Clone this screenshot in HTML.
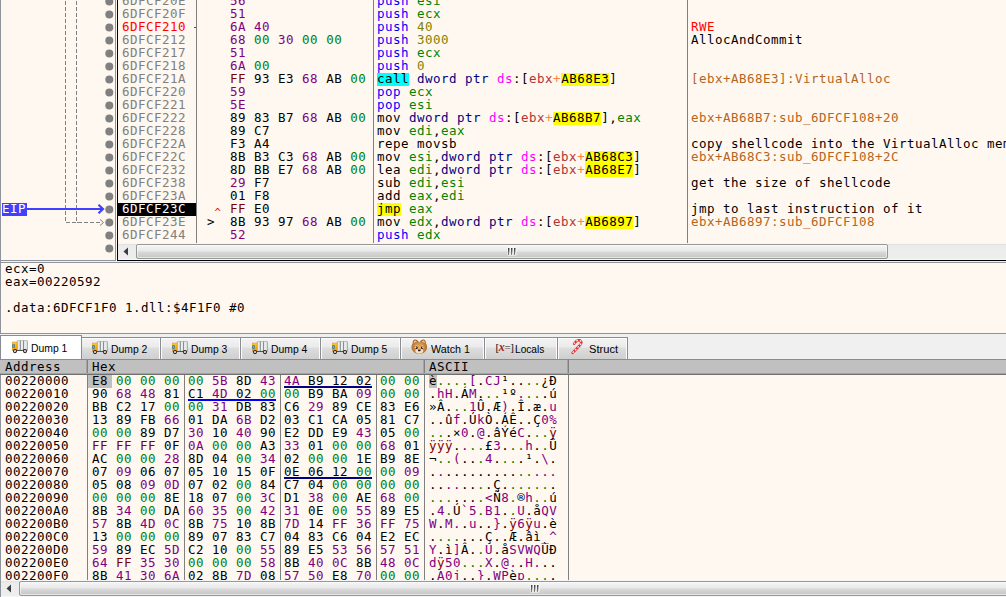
<!DOCTYPE html>
<html><head><meta charset="utf-8"><title>x64dbg</title>
<style>
html,body{margin:0;padding:0;}
body{width:1006px;height:597px;overflow:hidden;background:#FFF8F0;position:relative;font-family:"Liberation Sans",sans-serif;}
.abs{position:absolute;}
.m{font-family:"DejaVu Sans Mono","Liberation Mono",monospace;font-size:12.5px;letter-spacing:0.4744px;line-height:13px;white-space:pre;height:13px;}
.row{position:absolute;left:0;height:13px;}
.row span{position:absolute;top:-1px;height:13px;}
.row span i{font-style:normal;}
.row span.c{}
.bl{position:absolute;width:8px;height:8px;border-radius:50%;background:#808080;left:105.3px;}
.tab{position:absolute;top:338px;height:21px;box-sizing:border-box;border:1px solid #A9A9A9;border-bottom:none;background:linear-gradient(#F4F4F4 0%,#EDEDED 45%,#DEDEDE 55%,#D6D6D6 100%);}
.tab.act{top:335px;height:24px;background:#fff;border-color:#8C8E94;z-index:3;}
.tl{position:absolute;font-size:11px;line-height:14px;color:#000;white-space:pre;transform-origin:0 0;transform:scaleX(0.94);}
.ic{position:absolute;width:16px;height:16px;}
</style></head>
<body>
<div class="abs" style="left:0;top:0;width:1px;height:597px;background:#8E939C"></div>
<div class="abs" style="left:115px;top:0;width:1px;height:261px;background:#8E939C"></div>
<div class="abs" style="left:0;top:260px;width:116px;height:1px;background:#8E939C"></div>
<div class="abs" style="left:117px;top:0;width:1px;height:261px;background:#000"></div>
<div class="abs" style="left:117px;top:260px;width:889px;height:1px;background:#000"></div>
<svg class="abs" style="left:0;top:0" width="117" height="260" viewBox="0 0 117 260"><path d="M65.5 -5V222.5H102" fill="none" stroke="#808080" stroke-width="1" stroke-dasharray="4 2" shape-rendering="crispEdges"/><path d="M76.5 -5V222.5H80" fill="none" stroke="#808080" stroke-width="1" stroke-dasharray="4 2" shape-rendering="crispEdges"/><path d="M100 219.5L103.5 222.5L100 225.5" fill="none" stroke="#808080" stroke-width="1"/><rect x="2" y="203" width="25" height="13" fill="#4040FF"/><path d="M27 209H102" stroke="#4040FF" stroke-width="2" fill="none"/><path d="M98.5 204.8L103 209L98.5 213.2" stroke="#4040FF" stroke-width="2.2" fill="none"/><circle cx="109.3" cy="1.5" r="4" fill="#808080"/><circle cx="109.3" cy="14.5" r="4" fill="#808080"/><circle cx="109.3" cy="27.5" r="4" fill="#808080"/><circle cx="109.3" cy="40.5" r="4" fill="#808080"/><circle cx="109.3" cy="53.5" r="4" fill="#808080"/><circle cx="109.3" cy="66.5" r="4" fill="#808080"/><circle cx="109.3" cy="79.5" r="4" fill="#808080"/><circle cx="109.3" cy="92.5" r="4" fill="#808080"/><circle cx="109.3" cy="105.5" r="4" fill="#808080"/><circle cx="109.3" cy="118.5" r="4" fill="#808080"/><circle cx="109.3" cy="131.5" r="4" fill="#808080"/><circle cx="109.3" cy="144.5" r="4" fill="#808080"/><circle cx="109.3" cy="157.5" r="4" fill="#808080"/><circle cx="109.3" cy="170.5" r="4" fill="#808080"/><circle cx="109.3" cy="183.5" r="4" fill="#808080"/><circle cx="109.3" cy="196.5" r="4" fill="#808080"/><circle cx="109.3" cy="209.5" r="4" fill="#808080"/><circle cx="109.3" cy="222.5" r="4" fill="#808080"/><circle cx="109.3" cy="235.5" r="4" fill="#808080"/><circle cx="109.3" cy="248.5" r="4" fill="#808080"/></svg>
<div class="m abs" style="left:2px;top:202px;color:#fff;">EIP</div>
<div class="abs" style="left:196px;top:0;width:1px;height:243px;background:#808080"></div>
<div class="abs" style="left:373px;top:0;width:1px;height:243px;background:#808080"></div>
<div class="abs" style="left:687px;top:0;width:1px;height:243px;background:#808080"></div>
<div class="abs" style="left:118px;top:0;width:888px;height:243px;overflow:hidden;">
<div class="row m" style="top:-5px;width:888px;">
<span class="c" style="left:4px;color:#808080;">6DFCF20E</span>
<span class="c" style="left:112px;"><i style="color:#800080">56</i></span>
<span style="left:259px;"><i style="color:#0000FF">push</i><i style="color:#000000"> </i><i style="color:#008300">esi</i></span>
</div>
<div class="row m" style="top:8px;width:888px;">
<span class="c" style="left:4px;color:#808080;">6DFCF20F</span>
<span class="c" style="left:112px;"><i style="color:#800080">51</i></span>
<span style="left:259px;"><i style="color:#0000FF">push</i><i style="color:#000000"> </i><i style="color:#008300">ecx</i></span>
</div>
<div class="row m" style="top:21px;width:888px;">
<span class="c" style="left:4px;color:#FF0000;">6DFCF210</span>
<span class="c" style="left:112px;"><i style="color:#800080">6A</i> <i style="color:#800080">40</i></span>
<span style="left:259px;"><i style="color:#0000FF">push</i><i style="color:#000000"> </i><i style="color:#828200">40</i></span>
<span style="left:573px;color:#FF0000;">RWE</span>
</div>
<div class="row m" style="top:34px;width:888px;">
<span class="c" style="left:4px;color:#808080;">6DFCF212</span>
<span class="c" style="left:112px;"><i style="color:#800080">68</i> <i style="color:#008000">00</i> <i style="color:#800080">30</i> <i style="color:#008000">00</i> <i style="color:#008000">00</i></span>
<span style="left:259px;"><i style="color:#0000FF">push</i><i style="color:#000000"> </i><i style="color:#828200">3000</i></span>
<span style="left:573px;color:#000;">AllocAndCommit</span>
</div>
<div class="row m" style="top:47px;width:888px;">
<span class="c" style="left:4px;color:#808080;">6DFCF217</span>
<span class="c" style="left:112px;"><i style="color:#800080">51</i></span>
<span style="left:259px;"><i style="color:#0000FF">push</i><i style="color:#000000"> </i><i style="color:#008300">ecx</i></span>
</div>
<div class="row m" style="top:60px;width:888px;">
<span class="c" style="left:4px;color:#808080;">6DFCF218</span>
<span class="c" style="left:112px;"><i style="color:#800080">6A</i> <i style="color:#008000">00</i></span>
<span style="left:259px;"><i style="color:#0000FF">push</i><i style="color:#000000"> </i><i style="color:#828200">0</i></span>
</div>
<div class="row m" style="top:73px;width:888px;">
<span class="c" style="left:4px;color:#808080;">6DFCF21A</span>
<span class="c" style="left:112px;"><i style="color:#800000">FF</i> <i style="color:#000000">93</i> <i style="color:#000000">E3</i> <i style="color:#800080">68</i> <i style="color:#000000">AB</i> <i style="color:#008000">00</i></span>
<b style="position:absolute;left:259px;top:0;width:32px;height:13px;background:#00FFFF"></b><b style="position:absolute;left:443px;top:0;width:48px;height:13px;background:#FFFF00"></b><span style="left:259px;"><i style="color:#000000">call</i><i style="color:#000000"> </i><i style="color:#000080">dword ptr</i><i style="color:#000000"> </i><i style="color:#FF00FF">ds</i><i style="color:#000000">:[</i><i style="color:#B03434">ebx</i><i style="color:#FF8040">+</i><i style="color:#000000">AB68E3</i><i style="color:#000000">]</i></span>
<span style="left:573px;color:#B5651D;">[ebx+AB68E3]:VirtualAlloc</span>
</div>
<div class="row m" style="top:86px;width:888px;">
<span class="c" style="left:4px;color:#808080;">6DFCF220</span>
<span class="c" style="left:112px;"><i style="color:#800080">59</i></span>
<span style="left:259px;"><i style="color:#0000FF">pop</i><i style="color:#000000"> </i><i style="color:#008300">ecx</i></span>
</div>
<div class="row m" style="top:99px;width:888px;">
<span class="c" style="left:4px;color:#808080;">6DFCF221</span>
<span class="c" style="left:112px;"><i style="color:#800080">5E</i></span>
<span style="left:259px;"><i style="color:#0000FF">pop</i><i style="color:#000000"> </i><i style="color:#008300">esi</i></span>
</div>
<div class="row m" style="top:112px;width:888px;">
<span class="c" style="left:4px;color:#808080;">6DFCF222</span>
<span class="c" style="left:112px;"><i style="color:#000000">89</i> <i style="color:#000000">83</i> <i style="color:#000000">B7</i> <i style="color:#800080">68</i> <i style="color:#000000">AB</i> <i style="color:#008000">00</i></span>
<b style="position:absolute;left:435px;top:0;width:48px;height:13px;background:#FFFF00"></b><span style="left:259px;"><i style="color:#000000">mov </i><i style="color:#000080">dword ptr</i><i style="color:#000000"> </i><i style="color:#FF00FF">ds</i><i style="color:#000000">:[</i><i style="color:#B03434">ebx</i><i style="color:#FF8040">+</i><i style="color:#000000">AB68B7</i><i style="color:#000000">]</i><i style="color:#000000">,</i><i style="color:#008300">eax</i></span>
<span style="left:573px;color:#B5651D;">ebx+AB68B7:sub_6DFCF108+20</span>
</div>
<div class="row m" style="top:125px;width:888px;">
<span class="c" style="left:4px;color:#808080;">6DFCF228</span>
<span class="c" style="left:112px;"><i style="color:#000000">89</i> <i style="color:#000000">C7</i></span>
<span style="left:259px;"><i style="color:#000000">mov </i><i style="color:#008300">edi</i><i style="color:#000000">,</i><i style="color:#008300">eax</i></span>
</div>
<div class="row m" style="top:138px;width:888px;">
<span class="c" style="left:4px;color:#808080;">6DFCF22A</span>
<span class="c" style="left:112px;"><i style="color:#000000">F3</i> <i style="color:#000000">A4</i></span>
<span style="left:259px;"><i style="color:#000000">repe movsb</i></span>
<span style="left:573px;color:#000;">copy shellcode into the VirtualAlloc mem</span>
</div>
<div class="row m" style="top:151px;width:888px;">
<span class="c" style="left:4px;color:#808080;">6DFCF22C</span>
<span class="c" style="left:112px;"><i style="color:#000000">8B</i> <i style="color:#000000">B3</i> <i style="color:#000000">C3</i> <i style="color:#800080">68</i> <i style="color:#000000">AB</i> <i style="color:#008000">00</i></span>
<b style="position:absolute;left:467px;top:0;width:48px;height:13px;background:#FFFF00"></b><span style="left:259px;"><i style="color:#000000">mov </i><i style="color:#008300">esi</i><i style="color:#000000">,</i><i style="color:#000080">dword ptr</i><i style="color:#000000"> </i><i style="color:#FF00FF">ds</i><i style="color:#000000">:[</i><i style="color:#B03434">ebx</i><i style="color:#FF8040">+</i><i style="color:#000000">AB68C3</i><i style="color:#000000">]</i></span>
<span style="left:573px;color:#B5651D;">ebx+AB68C3:sub_6DFCF108+2C</span>
</div>
<div class="row m" style="top:164px;width:888px;">
<span class="c" style="left:4px;color:#808080;">6DFCF232</span>
<span class="c" style="left:112px;"><i style="color:#000000">8D</i> <i style="color:#000000">BB</i> <i style="color:#000000">E7</i> <i style="color:#800080">68</i> <i style="color:#000000">AB</i> <i style="color:#008000">00</i></span>
<b style="position:absolute;left:467px;top:0;width:48px;height:13px;background:#FFFF00"></b><span style="left:259px;"><i style="color:#000000">lea </i><i style="color:#008300">edi</i><i style="color:#000000">,</i><i style="color:#000080">dword ptr</i><i style="color:#000000"> </i><i style="color:#FF00FF">ds</i><i style="color:#000000">:[</i><i style="color:#B03434">ebx</i><i style="color:#FF8040">+</i><i style="color:#000000">AB68E7</i><i style="color:#000000">]</i></span>
</div>
<div class="row m" style="top:177px;width:888px;">
<span class="c" style="left:4px;color:#808080;">6DFCF238</span>
<span class="c" style="left:112px;"><i style="color:#800080">29</i> <i style="color:#000000">F7</i></span>
<span style="left:259px;"><i style="color:#000000">sub </i><i style="color:#008300">edi</i><i style="color:#000000">,</i><i style="color:#008300">esi</i></span>
<span style="left:573px;color:#000;">get the size of shellcode</span>
</div>
<div class="row m" style="top:190px;width:888px;">
<span class="c" style="left:4px;color:#808080;">6DFCF23A</span>
<span class="c" style="left:112px;"><i style="color:#000000">01</i> <i style="color:#000000">F8</i></span>
<span style="left:259px;"><i style="color:#000000">add </i><i style="color:#008300">eax</i><i style="color:#000000">,</i><i style="color:#008300">edi</i></span>
</div>
<div class="row m" style="top:203px;width:888px;">
<b style="position:absolute;left:0px;top:0;width:78px;height:13px;background:#000;"></b>
<span class="c" style="left:4px;color:#fff;">6DFCF23C</span>
<span style="left:95.5px;color:#FF0000;transform:translateY(4px) scale(0.85,0.8);transform-origin:4px 6px;">^</span>
<span class="c" style="left:112px;"><i style="color:#800000">FF</i> <i style="color:#000000">E0</i></span>
<b style="position:absolute;left:259px;top:0;width:24px;height:13px;background:#FFFF00"></b><span style="left:259px;"><i style="color:#000000">jmp</i><i style="color:#000000"> </i><i style="color:#008300">eax</i></span>
<span style="left:573px;color:#000;">jmp to last instruction of it</span>
</div>
<div class="row m" style="top:216px;width:888px;">
<span class="c" style="left:4px;color:#808080;">6DFCF23E</span>
<span style="left:89px;color:#000;">&gt;</span>
<span class="c" style="left:112px;"><i style="color:#000000">8B</i> <i style="color:#000000">93</i> <i style="color:#000000">97</i> <i style="color:#800080">68</i> <i style="color:#000000">AB</i> <i style="color:#008000">00</i></span>
<b style="position:absolute;left:467px;top:0;width:48px;height:13px;background:#FFFF00"></b><span style="left:259px;"><i style="color:#000000">mov </i><i style="color:#008300">edx</i><i style="color:#000000">,</i><i style="color:#000080">dword ptr</i><i style="color:#000000"> </i><i style="color:#FF00FF">ds</i><i style="color:#000000">:[</i><i style="color:#B03434">ebx</i><i style="color:#FF8040">+</i><i style="color:#000000">AB6897</i><i style="color:#000000">]</i></span>
<span style="left:573px;color:#B5651D;">ebx+AB6897:sub_6DFCF108</span>
</div>
<div class="row m" style="top:229px;width:888px;">
<span class="c" style="left:4px;color:#808080;">6DFCF244</span>
<span class="c" style="left:112px;"><i style="color:#800080">52</i></span>
<span style="left:259px;"><i style="color:#0000FF">push</i><i style="color:#000000"> </i><i style="color:#008300">edx</i></span>
</div>
<div class="abs" style="left:76px;top:27px;width:2px;height:1px;background:#FF0000"></div>
</div>
<div class="abs" style="left:118px;top:243px;width:888px;height:17px;background:linear-gradient(#F6F6F6 0px,#F6F6F6 1px,#E0E0E0 1px,#ECECEC 3px,#EEEEEE 16px,#F8F8F8 16px);overflow:hidden;"><svg class="abs" style="left:0;top:0" width="18" height="17"><path d="M5.5 8.5L10 4.5V12.5Z" fill="#3C3C3C"/></svg><div class="abs" style="left:18px;top:1px;width:752px;height:15px;box-sizing:border-box;border:1px solid #979797;border-radius:2px;background:linear-gradient(#F5F5F5 0px,#E9E9E9 6px,#D9D9D9 7px,#C6C6C6 13px);box-shadow:inset 0 0 0 1px rgba(255,255,255,0.55);"></div><div class="abs" style="left:389px;top:4px;width:10px;height:9px;background:rgba(255,255,255,0.45);border-radius:2px;"></div><div class="abs" style="left:390px;top:5px;width:1px;height:7px;background:linear-gradient(#3A3A3A,#8A8A8A);"></div><div class="abs" style="left:391px;top:5px;width:1px;height:7px;background:linear-gradient(#9A9A9A,#F4F4F4);"></div><div class="abs" style="left:393px;top:5px;width:1px;height:7px;background:linear-gradient(#3A3A3A,#8A8A8A);"></div><div class="abs" style="left:394px;top:5px;width:1px;height:7px;background:linear-gradient(#9A9A9A,#F4F4F4);"></div><div class="abs" style="left:396px;top:5px;width:1px;height:7px;background:linear-gradient(#3A3A3A,#8A8A8A);"></div><div class="abs" style="left:397px;top:5px;width:1px;height:7px;background:linear-gradient(#9A9A9A,#F4F4F4);"></div></div>
<div class="abs" style="left:1px;top:261px;width:1005px;height:1px;background:#F2F2F2"></div>
<div class="abs" style="left:0;top:262px;width:1006px;height:1px;background:#8E939C"></div>
<div class="abs" style="left:0;top:333px;width:1006px;height:1px;background:#8E939C"></div>
<div class="m abs" style="left:5px;top:262px;color:#000;">ecx=0</div>
<div class="m abs" style="left:5px;top:275px;color:#000;">eax=00220592</div>
<div class="m abs" style="left:5px;top:288px;color:#000;"></div>
<div class="m abs" style="left:5px;top:301px;color:#000;">.data:6DFCF1F0 1.dll:$4F1F0 #0</div>
<div class="abs" style="left:0;top:334px;width:1006px;height:25px;background:#F0F0F0"></div>
<div class="abs" style="left:0;top:359px;width:1006px;height:1px;background:#898C95;z-index:5"></div>
<div class="abs" style="left:0px;top:335px;width:82px;height:24px;box-sizing:border-box;border:1px solid #898C95;border-bottom:none;background:#fff;z-index:3"></div>
<svg class="ic" style="z-index:4;left:12px;top:340px" viewBox="0 0 16 16"><defs><linearGradient id="tg0" x1="0" x2="1" y1="0" y2="0"><stop offset="0" stop-color="#B4B4B8"/><stop offset="0.08" stop-color="#F4F4F6"/><stop offset="0.24" stop-color="#DCDCE6"/><stop offset="0.30" stop-color="#7C7C80"/><stop offset="0.36" stop-color="#F8F8F8"/><stop offset="0.55" stop-color="#E0E6E2"/><stop offset="0.61" stop-color="#7C7C80"/><stop offset="0.67" stop-color="#F8F8F8"/><stop offset="0.9" stop-color="#D4E0D8"/><stop offset="1" stop-color="#9C9CA0"/></linearGradient><linearGradient id="cb0" x1="0" x2="0" y1="0" y2="1"><stop offset="0" stop-color="#FFD040"/><stop offset="0.3" stop-color="#FFB810"/><stop offset="1" stop-color="#EFA000"/></linearGradient></defs><path d="M5 10.2V1.8Q5 0.4 6.4 0.4H14.4Q15.8 0.4 15.8 1.8V10.2Z" fill="url(#tg0)" stroke="#A0A0A4" stroke-width="0.7"/><path d="M8.35 1V10M11.7 1V10" stroke="#8C8C90" stroke-width="0.8"/><rect x="0.2" y="2" width="4.9" height="8.6" fill="url(#cb0)" stroke="#D89410" stroke-width="0.5"/><rect x="0.2" y="4.3" width="2.6" height="3.5" fill="#3C78B8"/><rect x="1.2" y="5" width="0.9" height="2.2" fill="#78A8D8"/><rect x="5" y="10" width="6.2" height="0.9" fill="#4A4040"/><circle cx="3" cy="11.1" r="2.05" fill="#2C1818"/><circle cx="3" cy="11.1" r="1.05" fill="#E4E4E4"/><circle cx="13" cy="11.1" r="2.05" fill="#2C1818"/><circle cx="13" cy="11.1" r="1.05" fill="#E4E4E4"/></svg>
<div class="tl" style="left:31.1px;top:340.5px;z-index:4;transform:scaleX(0.943);">Dump 1</div>
<div class="abs" style="left:80px;top:337px;width:81px;height:22px;box-sizing:border-box;border:1px solid #898C95;border-bottom:none;background:linear-gradient(#F3F3F3 0px,#EBEBEB 9px,#DDDDDD 10px,#CFCFCF 21px);box-shadow:inset 1px 1px 0 #FCFCFC,inset -1px 0 0 #FCFCFC;"></div>
<svg class="ic" style="z-index:4;left:92px;top:341px" viewBox="0 0 16 16"><defs><linearGradient id="tg1" x1="0" x2="1" y1="0" y2="0"><stop offset="0" stop-color="#B4B4B8"/><stop offset="0.08" stop-color="#F4F4F6"/><stop offset="0.24" stop-color="#DCDCE6"/><stop offset="0.30" stop-color="#7C7C80"/><stop offset="0.36" stop-color="#F8F8F8"/><stop offset="0.55" stop-color="#E0E6E2"/><stop offset="0.61" stop-color="#7C7C80"/><stop offset="0.67" stop-color="#F8F8F8"/><stop offset="0.9" stop-color="#D4E0D8"/><stop offset="1" stop-color="#9C9CA0"/></linearGradient><linearGradient id="cb1" x1="0" x2="0" y1="0" y2="1"><stop offset="0" stop-color="#FFD040"/><stop offset="0.3" stop-color="#FFB810"/><stop offset="1" stop-color="#EFA000"/></linearGradient></defs><path d="M5 10.2V1.8Q5 0.4 6.4 0.4H14.4Q15.8 0.4 15.8 1.8V10.2Z" fill="url(#tg1)" stroke="#A0A0A4" stroke-width="0.7"/><path d="M8.35 1V10M11.7 1V10" stroke="#8C8C90" stroke-width="0.8"/><rect x="0.2" y="2" width="4.9" height="8.6" fill="url(#cb1)" stroke="#D89410" stroke-width="0.5"/><rect x="0.2" y="4.3" width="2.6" height="3.5" fill="#3C78B8"/><rect x="1.2" y="5" width="0.9" height="2.2" fill="#78A8D8"/><rect x="5" y="10" width="6.2" height="0.9" fill="#4A4040"/><circle cx="3" cy="11.1" r="2.05" fill="#2C1818"/><circle cx="3" cy="11.1" r="1.05" fill="#E4E4E4"/><circle cx="13" cy="11.1" r="2.05" fill="#2C1818"/><circle cx="13" cy="11.1" r="1.05" fill="#E4E4E4"/></svg>
<div class="tl" style="left:111.4px;top:342px;z-index:4;transform:scaleX(0.943);">Dump 2</div>
<div class="abs" style="left:160px;top:337px;width:81px;height:22px;box-sizing:border-box;border:1px solid #898C95;border-bottom:none;background:linear-gradient(#F3F3F3 0px,#EBEBEB 9px,#DDDDDD 10px,#CFCFCF 21px);box-shadow:inset 1px 1px 0 #FCFCFC,inset -1px 0 0 #FCFCFC;"></div>
<svg class="ic" style="z-index:4;left:172px;top:341px" viewBox="0 0 16 16"><defs><linearGradient id="tg2" x1="0" x2="1" y1="0" y2="0"><stop offset="0" stop-color="#B4B4B8"/><stop offset="0.08" stop-color="#F4F4F6"/><stop offset="0.24" stop-color="#DCDCE6"/><stop offset="0.30" stop-color="#7C7C80"/><stop offset="0.36" stop-color="#F8F8F8"/><stop offset="0.55" stop-color="#E0E6E2"/><stop offset="0.61" stop-color="#7C7C80"/><stop offset="0.67" stop-color="#F8F8F8"/><stop offset="0.9" stop-color="#D4E0D8"/><stop offset="1" stop-color="#9C9CA0"/></linearGradient><linearGradient id="cb2" x1="0" x2="0" y1="0" y2="1"><stop offset="0" stop-color="#FFD040"/><stop offset="0.3" stop-color="#FFB810"/><stop offset="1" stop-color="#EFA000"/></linearGradient></defs><path d="M5 10.2V1.8Q5 0.4 6.4 0.4H14.4Q15.8 0.4 15.8 1.8V10.2Z" fill="url(#tg2)" stroke="#A0A0A4" stroke-width="0.7"/><path d="M8.35 1V10M11.7 1V10" stroke="#8C8C90" stroke-width="0.8"/><rect x="0.2" y="2" width="4.9" height="8.6" fill="url(#cb2)" stroke="#D89410" stroke-width="0.5"/><rect x="0.2" y="4.3" width="2.6" height="3.5" fill="#3C78B8"/><rect x="1.2" y="5" width="0.9" height="2.2" fill="#78A8D8"/><rect x="5" y="10" width="6.2" height="0.9" fill="#4A4040"/><circle cx="3" cy="11.1" r="2.05" fill="#2C1818"/><circle cx="3" cy="11.1" r="1.05" fill="#E4E4E4"/><circle cx="13" cy="11.1" r="2.05" fill="#2C1818"/><circle cx="13" cy="11.1" r="1.05" fill="#E4E4E4"/></svg>
<div class="tl" style="left:191.4px;top:342px;z-index:4;transform:scaleX(0.943);">Dump 3</div>
<div class="abs" style="left:240px;top:337px;width:81px;height:22px;box-sizing:border-box;border:1px solid #898C95;border-bottom:none;background:linear-gradient(#F3F3F3 0px,#EBEBEB 9px,#DDDDDD 10px,#CFCFCF 21px);box-shadow:inset 1px 1px 0 #FCFCFC,inset -1px 0 0 #FCFCFC;"></div>
<svg class="ic" style="z-index:4;left:252px;top:341px" viewBox="0 0 16 16"><defs><linearGradient id="tg3" x1="0" x2="1" y1="0" y2="0"><stop offset="0" stop-color="#B4B4B8"/><stop offset="0.08" stop-color="#F4F4F6"/><stop offset="0.24" stop-color="#DCDCE6"/><stop offset="0.30" stop-color="#7C7C80"/><stop offset="0.36" stop-color="#F8F8F8"/><stop offset="0.55" stop-color="#E0E6E2"/><stop offset="0.61" stop-color="#7C7C80"/><stop offset="0.67" stop-color="#F8F8F8"/><stop offset="0.9" stop-color="#D4E0D8"/><stop offset="1" stop-color="#9C9CA0"/></linearGradient><linearGradient id="cb3" x1="0" x2="0" y1="0" y2="1"><stop offset="0" stop-color="#FFD040"/><stop offset="0.3" stop-color="#FFB810"/><stop offset="1" stop-color="#EFA000"/></linearGradient></defs><path d="M5 10.2V1.8Q5 0.4 6.4 0.4H14.4Q15.8 0.4 15.8 1.8V10.2Z" fill="url(#tg3)" stroke="#A0A0A4" stroke-width="0.7"/><path d="M8.35 1V10M11.7 1V10" stroke="#8C8C90" stroke-width="0.8"/><rect x="0.2" y="2" width="4.9" height="8.6" fill="url(#cb3)" stroke="#D89410" stroke-width="0.5"/><rect x="0.2" y="4.3" width="2.6" height="3.5" fill="#3C78B8"/><rect x="1.2" y="5" width="0.9" height="2.2" fill="#78A8D8"/><rect x="5" y="10" width="6.2" height="0.9" fill="#4A4040"/><circle cx="3" cy="11.1" r="2.05" fill="#2C1818"/><circle cx="3" cy="11.1" r="1.05" fill="#E4E4E4"/><circle cx="13" cy="11.1" r="2.05" fill="#2C1818"/><circle cx="13" cy="11.1" r="1.05" fill="#E4E4E4"/></svg>
<div class="tl" style="left:271.4px;top:342px;z-index:4;transform:scaleX(0.943);">Dump 4</div>
<div class="abs" style="left:320px;top:337px;width:81px;height:22px;box-sizing:border-box;border:1px solid #898C95;border-bottom:none;background:linear-gradient(#F3F3F3 0px,#EBEBEB 9px,#DDDDDD 10px,#CFCFCF 21px);box-shadow:inset 1px 1px 0 #FCFCFC,inset -1px 0 0 #FCFCFC;"></div>
<svg class="ic" style="z-index:4;left:332px;top:341px" viewBox="0 0 16 16"><defs><linearGradient id="tg4" x1="0" x2="1" y1="0" y2="0"><stop offset="0" stop-color="#B4B4B8"/><stop offset="0.08" stop-color="#F4F4F6"/><stop offset="0.24" stop-color="#DCDCE6"/><stop offset="0.30" stop-color="#7C7C80"/><stop offset="0.36" stop-color="#F8F8F8"/><stop offset="0.55" stop-color="#E0E6E2"/><stop offset="0.61" stop-color="#7C7C80"/><stop offset="0.67" stop-color="#F8F8F8"/><stop offset="0.9" stop-color="#D4E0D8"/><stop offset="1" stop-color="#9C9CA0"/></linearGradient><linearGradient id="cb4" x1="0" x2="0" y1="0" y2="1"><stop offset="0" stop-color="#FFD040"/><stop offset="0.3" stop-color="#FFB810"/><stop offset="1" stop-color="#EFA000"/></linearGradient></defs><path d="M5 10.2V1.8Q5 0.4 6.4 0.4H14.4Q15.8 0.4 15.8 1.8V10.2Z" fill="url(#tg4)" stroke="#A0A0A4" stroke-width="0.7"/><path d="M8.35 1V10M11.7 1V10" stroke="#8C8C90" stroke-width="0.8"/><rect x="0.2" y="2" width="4.9" height="8.6" fill="url(#cb4)" stroke="#D89410" stroke-width="0.5"/><rect x="0.2" y="4.3" width="2.6" height="3.5" fill="#3C78B8"/><rect x="1.2" y="5" width="0.9" height="2.2" fill="#78A8D8"/><rect x="5" y="10" width="6.2" height="0.9" fill="#4A4040"/><circle cx="3" cy="11.1" r="2.05" fill="#2C1818"/><circle cx="3" cy="11.1" r="1.05" fill="#E4E4E4"/><circle cx="13" cy="11.1" r="2.05" fill="#2C1818"/><circle cx="13" cy="11.1" r="1.05" fill="#E4E4E4"/></svg>
<div class="tl" style="left:351.4px;top:342px;z-index:4;transform:scaleX(0.943);">Dump 5</div>
<div class="abs" style="left:400px;top:337px;width:85px;height:22px;box-sizing:border-box;border:1px solid #898C95;border-bottom:none;background:linear-gradient(#F3F3F3 0px,#EBEBEB 9px,#DDDDDD 10px,#CFCFCF 21px);box-shadow:inset 1px 1px 0 #FCFCFC,inset -1px 0 0 #FCFCFC;"></div>
<svg class="ic" style="z-index:4;left:411.3px;top:339px;width:17px;height:16px" viewBox="0 0 17 16"><defs><radialGradient id="cg" cx="0.5" cy="0.55" r="0.6"><stop offset="0" stop-color="#E4B070"/><stop offset="0.55" stop-color="#CC8C44"/><stop offset="1" stop-color="#9C5C24"/></radialGradient></defs><path d="M4.1 0.4C2.4 0.4 1.3 2.2 1.7 4.4C0.4 6 0.2 8.4 0.9 10.4C2 13.2 5 14.6 8.3 14.6C11.6 14.6 14.6 13.2 15.7 10.4C16.4 8.4 16.2 6 14.9 4.4C15.3 2.2 14 0.4 12.2 0.4C10.6 0.4 9.4 1.8 8.3 3.2C7.2 1.8 5.8 0.4 4.1 0.4Z" fill="url(#cg)"/><path d="M4 1.4C3 1.6 2.6 2.8 2.9 4L5.6 2.6C5.2 1.8 4.6 1.3 4 1.4Z M12.6 1.4C13.6 1.6 14 2.8 13.7 4L11 2.6C11.4 1.8 12 1.3 12.6 1.4Z" fill="#F0CC94"/><ellipse cx="8.3" cy="12" rx="3.9" ry="2.3" fill="#F8E2C0"/><path d="M4.6 6.6L6.4 7.2M12 6.6L10.2 7.2" stroke="#F4D8A8" stroke-width="0.8"/><ellipse cx="5.6" cy="8.7" rx="1" ry="1.2" fill="#1C1020"/><ellipse cx="11" cy="8.7" rx="1" ry="1.2" fill="#1C1020"/><circle cx="4.8" cy="8.4" r="0.6" fill="#fff"/><circle cx="11.8" cy="8.4" r="0.6" fill="#fff"/><path d="M6.7 10.4H9.9L9.3 12.2H7.3Z" fill="#2A1820"/></svg>
<div class="tl" style="left:431.3px;top:342px;z-index:4;transform:scaleX(0.975);">Watch 1</div>
<div class="abs" style="left:484px;top:337px;width:74px;height:22px;box-sizing:border-box;border:1px solid #898C95;border-bottom:none;background:linear-gradient(#F3F3F3 0px,#EBEBEB 9px,#DDDDDD 10px,#CFCFCF 21px);box-shadow:inset 1px 1px 0 #FCFCFC,inset -1px 0 0 #FCFCFC;"></div>
<div class="abs" style="left:495.5px;top:340px;font-family:'Liberation Serif',serif;font-size:11px;line-height:14px;color:#101010;white-space:pre;z-index:4;letter-spacing:-0.4px">[<i style="color:#A02828;font-size:12px;font-weight:bold">x</i><span style="color:#606060;font-weight:bold">=</span>]</div>
<div class="tl" style="left:515px;top:342px;z-index:4;transform:scaleX(0.921);">Locals</div>
<div class="abs" style="left:557px;top:337px;width:71px;height:22px;box-sizing:border-box;border:1px solid #898C95;border-bottom:none;background:linear-gradient(#F3F3F3 0px,#EBEBEB 9px,#DDDDDD 10px,#CFCFCF 21px);box-shadow:inset 1px 1px 0 #FCFCFC,inset -1px 0 0 #FCFCFC;"></div>
<svg class="ic" style="z-index:4;left:570px;top:339px" viewBox="0 0 16 16"><path d="M2.6 13.8L10.2 5.8C13 2.6 9.6 -0.2 6.4 2.2C5.4 3 4.6 4 4.2 4.8" fill="none" stroke="#E03030" stroke-width="2.5" stroke-linecap="round"/><path d="M2.6 13.8L10.2 5.8C13 2.6 9.6 -0.2 6.4 2.2C5.4 3 4.6 4 4.2 4.8" fill="none" stroke="#FFF0F0" stroke-width="1.3" stroke-linecap="butt" stroke-dasharray="1.7 1.9"/></svg>
<div class="tl" style="left:588.8px;top:342px;z-index:4;transform:scaleX(1.010);">Struct</div>
<div class="abs" style="left:0;top:360px;width:1006px;height:13px;background:#C0C0C0"></div>
<div class="abs" style="left:0;top:373px;width:1006px;height:1px;background:#A4A4A4"></div>
<div class="abs" style="left:0;top:374px;width:1006px;height:1px;background:#707070"></div>
<div class="abs" style="left:86px;top:360px;width:1px;height:13px;background:#A4A4A4"></div>
<div class="abs" style="left:87px;top:360px;width:1px;height:13px;background:#808080"></div>
<div class="abs" style="left:423px;top:360px;width:1px;height:13px;background:#A4A4A4"></div>
<div class="abs" style="left:424px;top:360px;width:1px;height:13px;background:#808080"></div>
<div class="abs" style="left:567px;top:360px;width:1px;height:13px;background:#A4A4A4"></div>
<div class="abs" style="left:568px;top:360px;width:1px;height:13px;background:#808080"></div>
<div class="m abs" style="left:5px;top:360px;color:#000;">Address</div>
<div class="m abs" style="left:92px;top:360px;color:#000;">Hex</div>
<div class="m abs" style="left:429px;top:360px;color:#000;">ASCII</div>
<div class="abs" style="left:87px;top:375px;width:1px;height:205px;background:#808080"></div>
<div class="abs" style="left:424px;top:375px;width:1px;height:205px;background:#808080"></div>
<div class="abs" style="left:568px;top:375px;width:1px;height:205px;background:#808080"></div>
<div class="abs" style="left:0;top:375px;width:1006px;height:205px;overflow:hidden;">
<div class="row m" style="top:0px;width:1006px;">
<span class="c" style="left:5px;color:#000;">00220000</span>
<b style="position:absolute;left:88px;top:0;width:24px;height:13px;background:#C0C0C0;"></b>
<b style="position:absolute;left:429px;top:0;width:8px;height:13px;background:#C0C0C0;"></b>
<span class="c" style="left:92px;"><i style="color:#000000">E8</i> <i style="color:#008000">00</i> <i style="color:#008000">00</i> <i style="color:#008000">00</i></span>
<span class="c" style="left:188px;"><i style="color:#008000">00</i> <i style="color:#800080">5B</i> <i style="color:#000000">8D</i> <i style="color:#800080">43</i></span>
<span class="c" style="left:284px;"><i style="color:#800080">4A</i> <i style="color:#000000">B9</i> <i style="color:#000000">12</i> <i style="color:#000000">02</i></span>
<span class="c" style="left:380px;"><i style="color:#008000">00</i> <i style="color:#008000">00</i></span>
<span style="left:429px;"><i style="color:#000000">è</i><i style="color:#008000">.</i><i style="color:#008000">.</i><i style="color:#008000">.</i><i style="color:#008000">.</i><i style="color:#800080">[</i><i style="color:#000000">.</i><i style="color:#800080">C</i><i style="color:#800080">J</i><i style="color:#000000">¹</i><i style="color:#000000">.</i><i style="color:#000000">.</i><i style="color:#008000">.</i><i style="color:#008000">.</i><i style="color:#000000">¿</i><i style="color:#000000">Ð</i></span>
</div>
<div class="row m" style="top:13px;width:1006px;">
<span class="c" style="left:5px;color:#000;">00220010</span>
<span class="c" style="left:92px;"><i style="color:#000000">90</i> <i style="color:#800080">68</i> <i style="color:#800080">48</i> <i style="color:#000000">81</i></span>
<span class="c" style="left:188px;"><i style="color:#000000">C1</i> <i style="color:#800080">4D</i> <i style="color:#000000">02</i> <i style="color:#008000">00</i></span>
<span class="c" style="left:284px;"><i style="color:#008000">00</i> <i style="color:#000000">B9</i> <i style="color:#000000">BA</i> <i style="color:#800080">09</i></span>
<span class="c" style="left:380px;"><i style="color:#008000">00</i> <i style="color:#008000">00</i></span>
<span style="left:429px;"><i style="color:#000000">.</i><i style="color:#800080">h</i><i style="color:#800080">H</i><i style="color:#000000">.</i><i style="color:#000000">Á</i><i style="color:#800080">M</i><i style="color:#000000">.</i><i style="color:#008000">.</i><i style="color:#008000">.</i><i style="color:#000000">¹</i><i style="color:#000000">º</i><i style="color:#800080">.</i><i style="color:#008000">.</i><i style="color:#008000">.</i><i style="color:#000000">.</i><i style="color:#000000">ú</i></span>
</div>
<div class="row m" style="top:26px;width:1006px;">
<span class="c" style="left:5px;color:#000;">00220020</span>
<span class="c" style="left:92px;"><i style="color:#000000">BB</i> <i style="color:#000000">C2</i> <i style="color:#000000">17</i> <i style="color:#008000">00</i></span>
<span class="c" style="left:188px;"><i style="color:#008000">00</i> <i style="color:#800080">31</i> <i style="color:#000000">DB</i> <i style="color:#000000">83</i></span>
<span class="c" style="left:284px;"><i style="color:#000000">C6</i> <i style="color:#800080">29</i> <i style="color:#000000">89</i> <i style="color:#000000">CE</i></span>
<span class="c" style="left:380px;"><i style="color:#000000">83</i> <i style="color:#000000">E6</i></span>
<span style="left:429px;"><i style="color:#000000">»</i><i style="color:#000000">Â</i><i style="color:#000000">.</i><i style="color:#008000">.</i><i style="color:#008000">.</i><i style="color:#800080">1</i><i style="color:#000000">Û</i><i style="color:#000000">.</i><i style="color:#000000">Æ</i><i style="color:#800080">)</i><i style="color:#000000">.</i><i style="color:#000000">Î</i><i style="color:#000000">.</i><i style="color:#000000">æ</i><i style="color:#000000">.</i><i style="color:#800080">u</i></span>
</div>
<div class="row m" style="top:39px;width:1006px;">
<span class="c" style="left:5px;color:#000;">00220030</span>
<span class="c" style="left:92px;"><i style="color:#000000">13</i> <i style="color:#000000">89</i> <i style="color:#000000">FB</i> <i style="color:#800080">66</i></span>
<span class="c" style="left:188px;"><i style="color:#000000">01</i> <i style="color:#000000">DA</i> <i style="color:#800080">6B</i> <i style="color:#000000">D2</i></span>
<span class="c" style="left:284px;"><i style="color:#000000">03</i> <i style="color:#000000">C1</i> <i style="color:#000000">CA</i> <i style="color:#000000">05</i></span>
<span class="c" style="left:380px;"><i style="color:#000000">81</i> <i style="color:#000000">C7</i></span>
<span style="left:429px;"><i style="color:#000000">.</i><i style="color:#000000">.</i><i style="color:#000000">û</i><i style="color:#800080">f</i><i style="color:#000000">.</i><i style="color:#000000">Ú</i><i style="color:#800080">k</i><i style="color:#000000">Ò</i><i style="color:#000000">.</i><i style="color:#000000">Á</i><i style="color:#000000">Ê</i><i style="color:#000000">.</i><i style="color:#000000">.</i><i style="color:#000000">Ç</i><i style="color:#800080">0</i><i style="color:#800080">%</i></span>
</div>
<div class="row m" style="top:52px;width:1006px;">
<span class="c" style="left:5px;color:#000;">00220040</span>
<span class="c" style="left:92px;"><i style="color:#008000">00</i> <i style="color:#008000">00</i> <i style="color:#000000">89</i> <i style="color:#000000">D7</i></span>
<span class="c" style="left:188px;"><i style="color:#800080">30</i> <i style="color:#000000">10</i> <i style="color:#800080">40</i> <i style="color:#000000">90</i></span>
<span class="c" style="left:284px;"><i style="color:#000000">E2</i> <i style="color:#000000">DD</i> <i style="color:#000000">E9</i> <i style="color:#800080">43</i></span>
<span class="c" style="left:380px;"><i style="color:#000000">05</i> <i style="color:#008000">00</i></span>
<span style="left:429px;"><i style="color:#008000">.</i><i style="color:#008000">.</i><i style="color:#000000">.</i><i style="color:#000000">×</i><i style="color:#800080">0</i><i style="color:#000000">.</i><i style="color:#800080">@</i><i style="color:#000000">.</i><i style="color:#000000">â</i><i style="color:#000000">Ý</i><i style="color:#000000">é</i><i style="color:#800080">C</i><i style="color:#000000">.</i><i style="color:#008000">.</i><i style="color:#008000">.</i><i style="color:#800000">ÿ</i></span>
</div>
<div class="row m" style="top:65px;width:1006px;">
<span class="c" style="left:5px;color:#000;">00220050</span>
<span class="c" style="left:92px;"><i style="color:#800000">FF</i> <i style="color:#800000">FF</i> <i style="color:#800000">FF</i> <i style="color:#000000">0F</i></span>
<span class="c" style="left:188px;"><i style="color:#800080">0A</i> <i style="color:#008000">00</i> <i style="color:#008000">00</i> <i style="color:#000000">A3</i></span>
<span class="c" style="left:284px;"><i style="color:#800080">33</i> <i style="color:#000000">01</i> <i style="color:#008000">00</i> <i style="color:#008000">00</i></span>
<span class="c" style="left:380px;"><i style="color:#800080">68</i> <i style="color:#000000">01</i></span>
<span style="left:429px;"><i style="color:#800000">ÿ</i><i style="color:#800000">ÿ</i><i style="color:#800000">ÿ</i><i style="color:#000000">.</i><i style="color:#800080">.</i><i style="color:#008000">.</i><i style="color:#008000">.</i><i style="color:#000000">£</i><i style="color:#800080">3</i><i style="color:#000000">.</i><i style="color:#008000">.</i><i style="color:#008000">.</i><i style="color:#800080">h</i><i style="color:#000000">.</i><i style="color:#008000">.</i><i style="color:#000000">Û</i></span>
</div>
<div class="row m" style="top:78px;width:1006px;">
<span class="c" style="left:5px;color:#000;">00220060</span>
<span class="c" style="left:92px;"><i style="color:#000000">AC</i> <i style="color:#008000">00</i> <i style="color:#008000">00</i> <i style="color:#800080">28</i></span>
<span class="c" style="left:188px;"><i style="color:#000000">8D</i> <i style="color:#000000">04</i> <i style="color:#008000">00</i> <i style="color:#800080">34</i></span>
<span class="c" style="left:284px;"><i style="color:#000000">02</i> <i style="color:#008000">00</i> <i style="color:#008000">00</i> <i style="color:#000000">1E</i></span>
<span class="c" style="left:380px;"><i style="color:#000000">B9</i> <i style="color:#000000">8E</i></span>
<span style="left:429px;"><i style="color:#000000">¬</i><i style="color:#008000">.</i><i style="color:#008000">.</i><i style="color:#800080">(</i><i style="color:#000000">.</i><i style="color:#000000">.</i><i style="color:#008000">.</i><i style="color:#800080">4</i><i style="color:#000000">.</i><i style="color:#008000">.</i><i style="color:#008000">.</i><i style="color:#000000">.</i><i style="color:#000000">¹</i><i style="color:#000000">.</i><i style="color:#800080">\</i><i style="color:#000000">.</i></span>
</div>
<div class="row m" style="top:91px;width:1006px;">
<span class="c" style="left:5px;color:#000;">00220070</span>
<span class="c" style="left:92px;"><i style="color:#000000">07</i> <i style="color:#800080">09</i> <i style="color:#000000">06</i> <i style="color:#000000">07</i></span>
<span class="c" style="left:188px;"><i style="color:#000000">05</i> <i style="color:#000000">10</i> <i style="color:#000000">15</i> <i style="color:#000000">0F</i></span>
<span class="c" style="left:284px;"><i style="color:#000000">0E</i> <i style="color:#000000">06</i> <i style="color:#000000">12</i> <i style="color:#008000">00</i></span>
<span class="c" style="left:380px;"><i style="color:#008000">00</i> <i style="color:#800080">09</i></span>
<span style="left:429px;"><i style="color:#000000">.</i><i style="color:#800080">.</i><i style="color:#000000">.</i><i style="color:#000000">.</i><i style="color:#000000">.</i><i style="color:#000000">.</i><i style="color:#000000">.</i><i style="color:#000000">.</i><i style="color:#000000">.</i><i style="color:#000000">.</i><i style="color:#000000">.</i><i style="color:#008000">.</i><i style="color:#008000">.</i><i style="color:#800080">.</i><i style="color:#800080">.</i><i style="color:#800080">.</i></span>
</div>
<div class="row m" style="top:104px;width:1006px;">
<span class="c" style="left:5px;color:#000;">00220080</span>
<span class="c" style="left:92px;"><i style="color:#000000">05</i> <i style="color:#000000">08</i> <i style="color:#800080">09</i> <i style="color:#800080">0D</i></span>
<span class="c" style="left:188px;"><i style="color:#000000">07</i> <i style="color:#000000">02</i> <i style="color:#008000">00</i> <i style="color:#000000">84</i></span>
<span class="c" style="left:284px;"><i style="color:#000000">C7</i> <i style="color:#000000">04</i> <i style="color:#008000">00</i> <i style="color:#008000">00</i></span>
<span class="c" style="left:380px;"><i style="color:#008000">00</i> <i style="color:#008000">00</i></span>
<span style="left:429px;"><i style="color:#000000">.</i><i style="color:#000000">.</i><i style="color:#800080">.</i><i style="color:#800080">.</i><i style="color:#000000">.</i><i style="color:#000000">.</i><i style="color:#008000">.</i><i style="color:#000000">.</i><i style="color:#000000">Ç</i><i style="color:#000000">.</i><i style="color:#008000">.</i><i style="color:#008000">.</i><i style="color:#008000">.</i><i style="color:#008000">.</i><i style="color:#008000">.</i><i style="color:#000000">.</i></span>
</div>
<div class="row m" style="top:117px;width:1006px;">
<span class="c" style="left:5px;color:#000;">00220090</span>
<span class="c" style="left:92px;"><i style="color:#008000">00</i> <i style="color:#008000">00</i> <i style="color:#008000">00</i> <i style="color:#000000">8E</i></span>
<span class="c" style="left:188px;"><i style="color:#000000">18</i> <i style="color:#000000">07</i> <i style="color:#008000">00</i> <i style="color:#800080">3C</i></span>
<span class="c" style="left:284px;"><i style="color:#000000">D1</i> <i style="color:#800080">38</i> <i style="color:#008000">00</i> <i style="color:#000000">AE</i></span>
<span class="c" style="left:380px;"><i style="color:#800080">68</i> <i style="color:#008000">00</i></span>
<span style="left:429px;"><i style="color:#008000">.</i><i style="color:#008000">.</i><i style="color:#008000">.</i><i style="color:#000000">.</i><i style="color:#000000">.</i><i style="color:#000000">.</i><i style="color:#008000">.</i><i style="color:#800080">&lt;</i><i style="color:#000000">Ñ</i><i style="color:#800080">8</i><i style="color:#008000">.</i><i style="color:#000000">®</i><i style="color:#800080">h</i><i style="color:#008000">.</i><i style="color:#008000">.</i><i style="color:#000000">ú</i></span>
</div>
<div class="row m" style="top:130px;width:1006px;">
<span class="c" style="left:5px;color:#000;">002200A0</span>
<span class="c" style="left:92px;"><i style="color:#000000">8B</i> <i style="color:#800080">34</i> <i style="color:#008000">00</i> <i style="color:#000000">DA</i></span>
<span class="c" style="left:188px;"><i style="color:#800080">60</i> <i style="color:#800080">35</i> <i style="color:#008000">00</i> <i style="color:#800080">42</i></span>
<span class="c" style="left:284px;"><i style="color:#800080">31</i> <i style="color:#000000">0E</i> <i style="color:#008000">00</i> <i style="color:#800080">55</i></span>
<span class="c" style="left:380px;"><i style="color:#000000">89</i> <i style="color:#000000">E5</i></span>
<span style="left:429px;"><i style="color:#000000">.</i><i style="color:#800080">4</i><i style="color:#008000">.</i><i style="color:#000000">Ú</i><i style="color:#800080">`</i><i style="color:#800080">5</i><i style="color:#008000">.</i><i style="color:#800080">B</i><i style="color:#800080">1</i><i style="color:#000000">.</i><i style="color:#008000">.</i><i style="color:#800080">U</i><i style="color:#000000">.</i><i style="color:#000000">å</i><i style="color:#800080">Q</i><i style="color:#800080">V</i></span>
</div>
<div class="row m" style="top:143px;width:1006px;">
<span class="c" style="left:5px;color:#000;">002200B0</span>
<span class="c" style="left:92px;"><i style="color:#800080">57</i> <i style="color:#000000">8B</i> <i style="color:#800080">4D</i> <i style="color:#800080">0C</i></span>
<span class="c" style="left:188px;"><i style="color:#000000">8B</i> <i style="color:#800080">75</i> <i style="color:#000000">10</i> <i style="color:#000000">8B</i></span>
<span class="c" style="left:284px;"><i style="color:#800080">7D</i> <i style="color:#000000">14</i> <i style="color:#800000">FF</i> <i style="color:#800080">36</i></span>
<span class="c" style="left:380px;"><i style="color:#800000">FF</i> <i style="color:#800080">75</i></span>
<span style="left:429px;"><i style="color:#800080">W</i><i style="color:#000000">.</i><i style="color:#800080">M</i><i style="color:#800080">.</i><i style="color:#000000">.</i><i style="color:#800080">u</i><i style="color:#000000">.</i><i style="color:#000000">.</i><i style="color:#800080">}</i><i style="color:#000000">.</i><i style="color:#800000">ÿ</i><i style="color:#800080">6</i><i style="color:#800000">ÿ</i><i style="color:#800080">u</i><i style="color:#000000">.</i><i style="color:#000000">è</i></span>
</div>
<div class="row m" style="top:156px;width:1006px;">
<span class="c" style="left:5px;color:#000;">002200C0</span>
<span class="c" style="left:92px;"><i style="color:#000000">13</i> <i style="color:#008000">00</i> <i style="color:#008000">00</i> <i style="color:#008000">00</i></span>
<span class="c" style="left:188px;"><i style="color:#000000">89</i> <i style="color:#000000">07</i> <i style="color:#000000">83</i> <i style="color:#000000">C7</i></span>
<span class="c" style="left:284px;"><i style="color:#000000">04</i> <i style="color:#000000">83</i> <i style="color:#000000">C6</i> <i style="color:#000000">04</i></span>
<span class="c" style="left:380px;"><i style="color:#000000">E2</i> <i style="color:#000000">EC</i></span>
<span style="left:429px;"><i style="color:#000000">.</i><i style="color:#008000">.</i><i style="color:#008000">.</i><i style="color:#008000">.</i><i style="color:#000000">.</i><i style="color:#000000">.</i><i style="color:#000000">.</i><i style="color:#000000">Ç</i><i style="color:#000000">.</i><i style="color:#000000">.</i><i style="color:#000000">Æ</i><i style="color:#000000">.</i><i style="color:#000000">â</i><i style="color:#000000">ì</i><i style="color:#800080">_</i><i style="color:#800080">^</i></span>
</div>
<div class="row m" style="top:169px;width:1006px;">
<span class="c" style="left:5px;color:#000;">002200D0</span>
<span class="c" style="left:92px;"><i style="color:#800080">59</i> <i style="color:#000000">89</i> <i style="color:#000000">EC</i> <i style="color:#800080">5D</i></span>
<span class="c" style="left:188px;"><i style="color:#000000">C2</i> <i style="color:#000000">10</i> <i style="color:#008000">00</i> <i style="color:#800080">55</i></span>
<span class="c" style="left:284px;"><i style="color:#000000">89</i> <i style="color:#000000">E5</i> <i style="color:#800080">53</i> <i style="color:#800080">56</i></span>
<span class="c" style="left:380px;"><i style="color:#800080">57</i> <i style="color:#800080">51</i></span>
<span style="left:429px;"><i style="color:#800080">Y</i><i style="color:#000000">.</i><i style="color:#000000">ì</i><i style="color:#800080">]</i><i style="color:#000000">Â</i><i style="color:#000000">.</i><i style="color:#008000">.</i><i style="color:#800080">U</i><i style="color:#000000">.</i><i style="color:#000000">å</i><i style="color:#800080">S</i><i style="color:#800080">V</i><i style="color:#800080">W</i><i style="color:#800080">Q</i><i style="color:#000000">Ù</i><i style="color:#000000">Ð</i></span>
</div>
<div class="row m" style="top:182px;width:1006px;">
<span class="c" style="left:5px;color:#000;">002200E0</span>
<span class="c" style="left:92px;"><i style="color:#800080">64</i> <i style="color:#800000">FF</i> <i style="color:#800080">35</i> <i style="color:#800080">30</i></span>
<span class="c" style="left:188px;"><i style="color:#008000">00</i> <i style="color:#008000">00</i> <i style="color:#008000">00</i> <i style="color:#800080">58</i></span>
<span class="c" style="left:284px;"><i style="color:#000000">8B</i> <i style="color:#800080">40</i> <i style="color:#800080">0C</i> <i style="color:#000000">8B</i></span>
<span class="c" style="left:380px;"><i style="color:#800080">48</i> <i style="color:#800080">0C</i></span>
<span style="left:429px;"><i style="color:#800080">d</i><i style="color:#800000">ÿ</i><i style="color:#800080">5</i><i style="color:#800080">0</i><i style="color:#008000">.</i><i style="color:#008000">.</i><i style="color:#008000">.</i><i style="color:#800080">X</i><i style="color:#000000">.</i><i style="color:#800080">@</i><i style="color:#800080">.</i><i style="color:#000000">.</i><i style="color:#800080">H</i><i style="color:#800080">.</i><i style="color:#000000">.</i><i style="color:#000000">.</i></span>
</div>
<div class="row m" style="top:195px;width:1006px;">
<span class="c" style="left:5px;color:#000;">002200F0</span>
<span class="c" style="left:92px;"><i style="color:#000000">8B</i> <i style="color:#800080">41</i> <i style="color:#800080">30</i> <i style="color:#800080">6A</i></span>
<span class="c" style="left:188px;"><i style="color:#000000">02</i> <i style="color:#000000">8B</i> <i style="color:#800080">7D</i> <i style="color:#000000">08</i></span>
<span class="c" style="left:284px;"><i style="color:#800080">57</i> <i style="color:#800080">50</i> <i style="color:#000000">E8</i> <i style="color:#800080">70</i></span>
<span class="c" style="left:380px;"><i style="color:#008000">00</i> <i style="color:#008000">00</i></span>
<span style="left:429px;"><i style="color:#000000">.</i><i style="color:#800080">A</i><i style="color:#800080">0</i><i style="color:#800080">j</i><i style="color:#000000">.</i><i style="color:#000000">.</i><i style="color:#800080">}</i><i style="color:#000000">.</i><i style="color:#800080">W</i><i style="color:#800080">P</i><i style="color:#000000">è</i><i style="color:#800080">p</i><i style="color:#008000">.</i><i style="color:#008000">.</i><i style="color:#008000">.</i><i style="color:#000000">.</i></span>
</div>
<div class="abs" style="left:184px;top:0;width:1px;height:205px;background:#808080"></div>
<div class="abs" style="left:280px;top:0;width:1px;height:205px;background:#808080"></div>
<div class="abs" style="left:376px;top:0;width:1px;height:205px;background:#808080"></div>
<div class="abs" style="left:284px;top:11px;width:88px;height:2px;background:#000080"></div>
<div class="abs" style="left:188px;top:24px;width:88px;height:2px;background:#0000FF"></div>
<div class="abs" style="left:284px;top:102px;width:88px;height:2px;background:#000080"></div>
</div>
<div class="abs" style="left:1px;top:580px;width:1005px;height:17px;background:linear-gradient(#F6F6F6 0px,#F6F6F6 1px,#E0E0E0 1px,#ECECEC 3px,#EEEEEE 16px,#F8F8F8 16px);overflow:hidden;"><svg class="abs" style="left:0;top:0" width="18" height="17"><path d="M5.5 8.5L10 4.5V12.5Z" fill="#3C3C3C"/></svg><div class="abs" style="left:18px;top:1px;width:1081px;height:15px;box-sizing:border-box;border:1px solid #979797;border-radius:2px;background:linear-gradient(#F5F5F5 0px,#E9E9E9 6px,#D9D9D9 7px,#C6C6C6 13px);box-shadow:inset 0 0 0 1px rgba(255,255,255,0.55);"></div><div class="abs" style="left:529px;top:4px;width:10px;height:9px;background:rgba(255,255,255,0.45);border-radius:2px;"></div><div class="abs" style="left:530px;top:5px;width:1px;height:7px;background:linear-gradient(#3A3A3A,#8A8A8A);"></div><div class="abs" style="left:531px;top:5px;width:1px;height:7px;background:linear-gradient(#9A9A9A,#F4F4F4);"></div><div class="abs" style="left:533px;top:5px;width:1px;height:7px;background:linear-gradient(#3A3A3A,#8A8A8A);"></div><div class="abs" style="left:534px;top:5px;width:1px;height:7px;background:linear-gradient(#9A9A9A,#F4F4F4);"></div><div class="abs" style="left:536px;top:5px;width:1px;height:7px;background:linear-gradient(#3A3A3A,#8A8A8A);"></div><div class="abs" style="left:537px;top:5px;width:1px;height:7px;background:linear-gradient(#9A9A9A,#F4F4F4);"></div></div>
</body></html>
